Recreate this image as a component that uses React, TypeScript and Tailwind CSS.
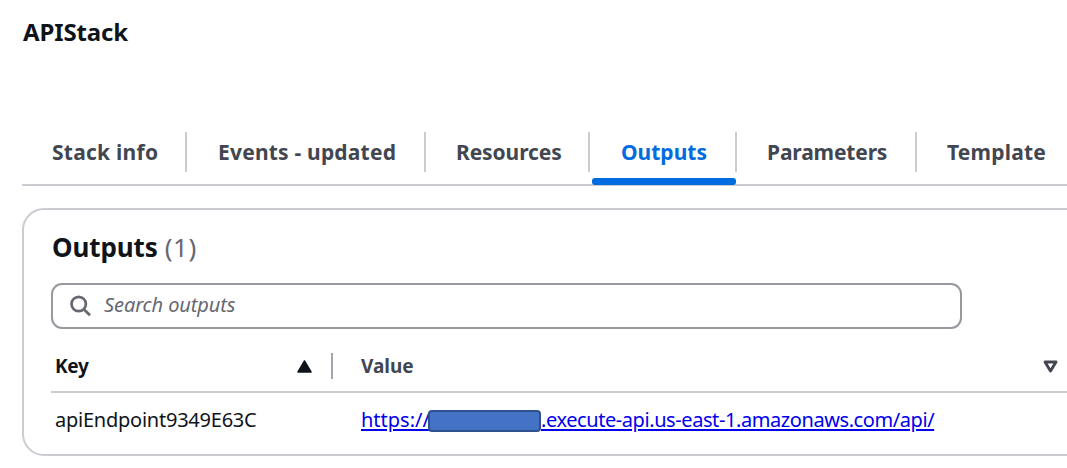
import React from "react";

type Tab = { label: string; box: string; text: string; active?: boolean };

const tabs: Tab[] = [
  { label: "Stack info", box: "w-[165px] pl-[30px]", text: "tracking-[0.25px]" },
  { label: "Events - updated", box: "w-[239px] pl-[31px]", text: "tracking-[0.2px]" },
  { label: "Resources", box: "w-[164px] pl-[30px]", text: "tracking-[-0.1px]" },
  { label: "Outputs", box: "w-[147px] pl-[31px]", text: "tracking-[0px]", active: true },
  { label: "Parameters", box: "w-[180px] pl-[30px]", text: "tracking-[-0.15px]" },
  { label: "Template", box: "w-[150px] pl-[30px]", text: "tracking-[0.2px]" },
];

function TabItem({ tab, last }: { tab: Tab; last: boolean }) {
  return (
    <div
      className={`relative flex h-10 shrink-0 items-center border-[#cbcbd2] ${last ? "" : "border-r-2"} ${tab.box}`}
    >
      <span className={`${tab.text} ${tab.active ? "text-[#006ce0]" : "text-[#424650]"}`}>{tab.label}</span>
      {tab.active && (
        <span className="absolute -bottom-[13px] left-[2px] h-[7px] w-[144px] rounded-[3px] bg-[#006ce0]" />
      )}
    </div>
  );
}

export default function App() {
  return (
    <div className="h-[468px] w-[1067px] overflow-hidden bg-white pl-[22px] font-['Noto_Sans',sans-serif] whitespace-nowrap text-[#0f141a]">
      <h1 className="h-[132px] pt-[16px] pl-px text-[24px] leading-8 font-bold tracking-[-0.15px]">APIStack</h1>
      <nav className="flex h-[54px] border-b-2 border-[#cbcbd2] text-[21px] leading-8 font-bold">
        {tabs.map((tab, i) => (
          <TabItem key={tab.label} tab={tab} last={i === tabs.length - 1} />
        ))}
      </nav>
      <section className="mt-[22px] h-[248px] w-[1080px] rounded-[22px] border-2 border-[#cbcbd2] pl-[27px]">
        <h2 className="flex h-[73px] gap-[7px] pt-[17px] pl-px text-[26px] leading-10 font-bold">
          <span className="tracking-[-0.1px]">Outputs</span>
          <span className="font-normal tracking-[0.5px] text-[#656871]">(1)</span>
        </h2>
        <div className="flex h-[46px] w-[911px] items-center rounded-[11px] border-2 border-[#98989f] pl-[17px]">
          <svg className="size-[22px]" viewBox="0 0 22 22" fill="none" stroke="#656871" strokeWidth="2.7">
            <circle cx="8.7" cy="9" r="7.2" />
            <path d="M13.8 14.2 20 20.3" />
          </svg>
          <span className="pb-[2px] pl-[12px] text-[20px] leading-7 tracking-[-0.1px] text-[#656871] italic">
            Search outputs
          </span>
        </div>
        <div className="flex h-[64px] items-center border-b-2 border-[#cbcbd2] pt-[12px] text-[19px] leading-7 font-bold">
          <div className="flex h-[26px] w-[282px] items-center justify-between border-r-2 border-[#a4a4ad] pr-[19px] pl-[4px]">
            <span className="pb-px tracking-[-0.3px]">Key</span>
            <svg className="h-[13px] w-[15px]" viewBox="0 0 15 13">
              <path d="M7.5 1 14 12H1Z" fill="#0f141a" stroke="#0f141a" strokeWidth="1.5" strokeLinejoin="round" />
            </svg>
          </div>
          <div className="flex w-[725px] items-center justify-between pl-[28px] text-[#424650]">
            <span className="pb-px">Value</span>
            <svg className="h-[13px] w-[15px]" viewBox="0 0 15 13">
              <path d="M2 2h11L7.500 11Z" fill="none" stroke="#424650" strokeWidth="2.9" strokeLinejoin="round" />
            </svg>
          </div>
        </div>
        <div className="flex h-[54px] items-center text-[20px] leading-7">
          <span className="w-[310px] pl-[4px] tracking-[-0.24px]">apiEndpoint9349E63C</span>
          <a className="relative flex text-[#0000ee] underline decoration-2 underline-offset-[2px]" href="#">
            <span className="w-[180px]">https://</span>
            <span className="absolute top-[4px] left-[67px] h-[22px] w-[113px] rounded-[4px] border-2 border-[#2f528f] bg-[#4472c4]" />
            <span className="tracking-[-0.42px]">.execute-api.us-east-1.amazonaws.com/api/</span>
          </a>
        </div>
      </section>
    </div>
  );
}
